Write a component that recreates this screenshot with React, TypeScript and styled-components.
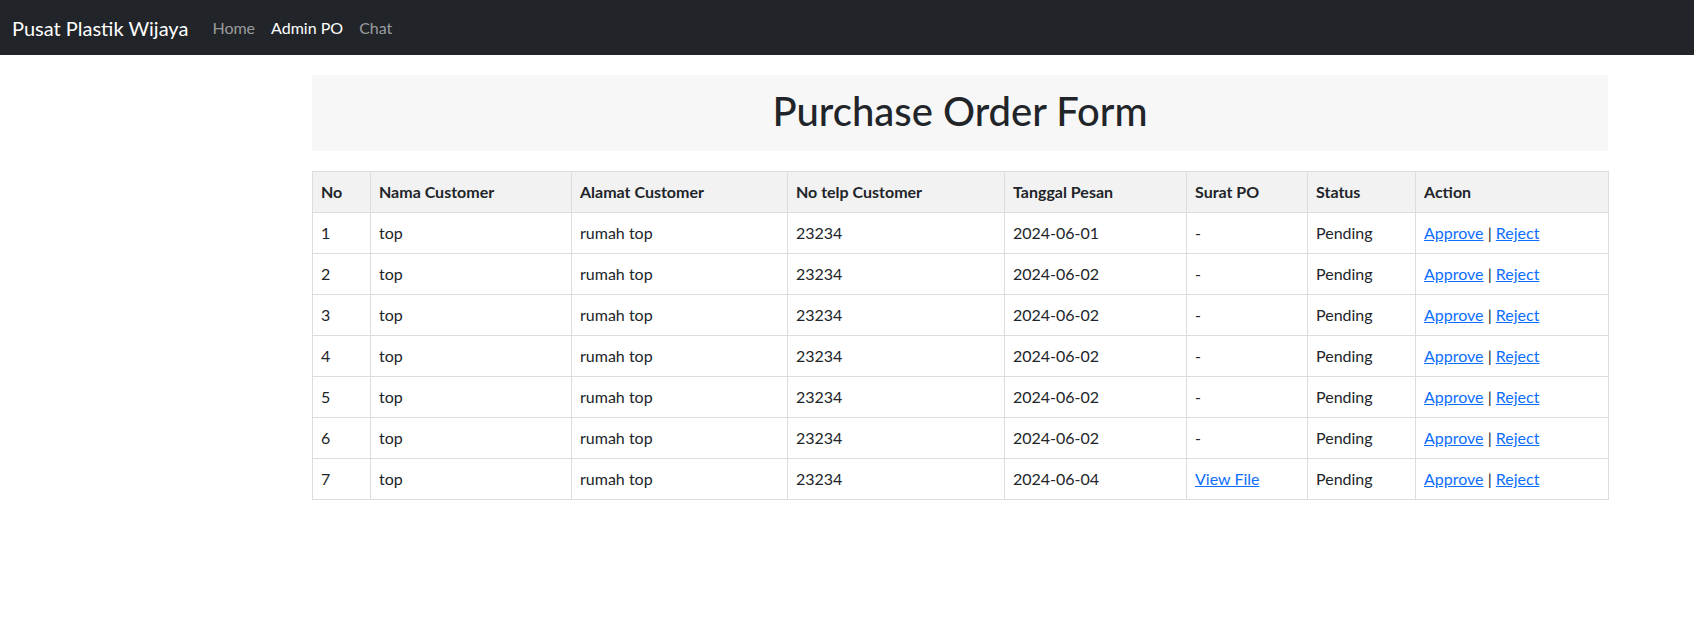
import React from "react";
import styled, { createGlobalStyle } from "styled-components";

const GlobalStyle = createGlobalStyle`
  html, body {
    margin: 0;
    padding: 0;
    background: #ffffff;
  }
  body {
    font-family: "Segoe UI", Lato, "Noto Sans", "Liberation Sans", sans-serif;
    font-size: 16px;
    line-height: 1.5;
    color: #212529;
  }
  * { box-sizing: border-box; }
`;

const Navbar = styled.nav`
  background: #212529;
  height: 55px;
  display: flex;
  align-items: center;
  padding: 0 12px;
`;

const Brand = styled.a`
  color: #ffffff;
  font-size: 20px;
  line-height: 30px;
  text-decoration: none;
  margin-right: 16px;
  padding: 5px 0;
`;

const NavList = styled.ul`
  display: flex;
  list-style: none;
  margin: 0;
  padding: 0;
`;

const NavLink = styled.a<{ $active?: boolean }>`
  display: block;
  padding: 8px 8px;
  font-size: 16px;
  line-height: 24px;
  text-decoration: none;
  color: ${(p) => (p.$active ? "#ffffff" : "rgba(255, 255, 255, 0.55)")};
`;

const Main = styled.main`
  padding: 20px 0 40px 312px;
`;

const Content = styled.div`
  width: 1296px;
  display: flex;
  flex-direction: column;
  gap: 20px;
`;

const TitleBand = styled.div`
  background: #f7f7f7;
  height: 76px;
  display: flex;
  align-items: center;
  justify-content: center;
`;

const Title = styled.h1`
  margin: 0 0 4px 0;
  font-size: 40px;
  line-height: 48px;
  font-weight: 500;
  color: #212529;
`;

const Table = styled.table`
  width: 1296px;
  border-collapse: collapse;
  table-layout: fixed;
`;

const Th = styled.th<{ $w: number }>`
  width: ${(p) => p.$w}px;
  background: #f2f2f2;
  border: 1px solid #dddddd;
  padding: 8px;
  text-align: left;
  font-weight: 700;
  line-height: 24px;
`;

const Td = styled.td`
  border: 1px solid #dddddd;
  padding: 8px;
  text-align: left;
  line-height: 24px;
`;

const Link = styled.a`
  color: #0d6efd;
  text-decoration: underline;
`;

const columns: [string, number][] = [
  ["No", 58],
  ["Nama Customer", 201],
  ["Alamat Customer", 216],
  ["No telp Customer", 217],
  ["Tanggal Pesan", 182],
  ["Surat PO", 121],
  ["Status", 108],
  ["Action", 193],
];

const rows = [
  { no: 1, date: "2024-06-01", file: false },
  { no: 2, date: "2024-06-02", file: false },
  { no: 3, date: "2024-06-02", file: false },
  { no: 4, date: "2024-06-02", file: false },
  { no: 5, date: "2024-06-02", file: false },
  { no: 6, date: "2024-06-02", file: false },
  { no: 7, date: "2024-06-04", file: true },
];

export default function App() {
  return (
    <>
      <GlobalStyle />
      <Navbar>
        <Brand href="#">Pusat Plastik Wijaya</Brand>
        <NavList>
          <li><NavLink href="#">Home</NavLink></li>
          <li><NavLink href="#" $active>Admin PO</NavLink></li>
          <li><NavLink href="#">Chat</NavLink></li>
        </NavList>
      </Navbar>
      <Main>
        <Content>
          <TitleBand>
            <Title>Purchase Order Form</Title>
          </TitleBand>
          <Table>
            <thead>
              <tr>
                {columns.map(([label, w]) => (
                  <Th key={label} $w={w}>{label}</Th>
                ))}
              </tr>
            </thead>
            <tbody>
              {rows.map((r) => (
                <tr key={r.no}>
                  <Td>{r.no}</Td>
                  <Td>top</Td>
                  <Td>rumah top</Td>
                  <Td>23234</Td>
                  <Td>{r.date}</Td>
                  <Td>{r.file ? <Link href="#">View File</Link> : "-"}</Td>
                  <Td>Pending</Td>
                  <Td>
                    <Link href="#">Approve</Link> | <Link href="#">Reject</Link>
                  </Td>
                </tr>
              ))}
            </tbody>
          </Table>
        </Content>
      </Main>
    </>
  );
}
